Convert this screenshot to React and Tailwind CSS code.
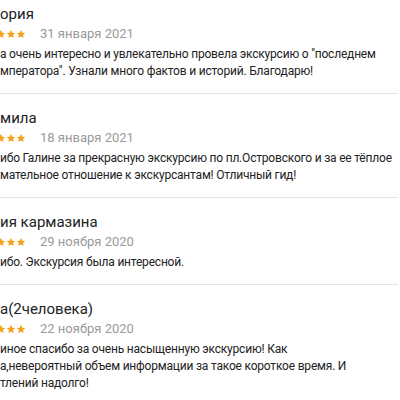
import React from 'react';

const REVIEWS = [
    {
        name: 'ория',
        date: '31 января 2021',
        lines: ['а очень интересно и увлекательно провела экскурсию о "последнем', 'мператора". Узнали много фактов и историй. Благодарю!']
    },
    {
        name: 'мила',
        date: '18 января 2021',
        lines: ['ибо Галине за прекрасную экскурсию по пл.Островского и за ее тёплое', 'мательное отношение к экскурсантам! Отличный гид!']
    },
    {
        name: 'ия кармазина',
        date: '29 ноября 2020',
        lines: ['ибо. Экскурсия была интересной.']
    },
    {
        name: 'а(2человека)',
        date: '22 ноября 2020',
        lines: ['иное спасибо за очень насыщенную экскурсию! Как', 'а,невероятный объем информации за такое короткое время. И', 'тлений надолго!']
    }
];

const Star = () => (
    <svg viewBox="0 0 24 24" className="w-[10px] h-[10px] flex-shrink-0" fill="#f3a21c">
        <path d="M12 1.8l3 7 7.4.6-5.6 4.9 1.7 7.3L12 17.7l-6.5 3.9 1.7-7.3-5.6-4.9 7.4-.6z" />
    </svg>
);

const ReviewItem = ({ review }) => (
    <div className="pt-[13px] pb-[13px] border-b border-[#e4e4e4]">
        {/* Name */}
        <div className="text-[15px] leading-[22px] text-[#222]">{review.name}</div>

        {/* Rating + date */}
        <div className="flex items-center h-[18px]">
            <div className="flex items-center ml-[-4px] w-[44px]">
                <Star />
                <Star />
                <Star />
            </div>
            <span className="text-[13px] text-[#9a9a9a]">{review.date}</span>
        </div>

        {/* Text */}
        <div className="mt-[3px] text-[12px] leading-[17px] tracking-[-0.2px] text-[#222]">
            {review.lines.map((line) => (
                <div key={line} className="whitespace-nowrap">{line}</div>
            ))}
        </div>
    </div>
);

export default function App() {
    return (
        <div className="w-[400px] h-[400px] overflow-hidden bg-white font-['Roboto',sans-serif]">
            <div className="mt-[-10px] mr-[2px]">
                {REVIEWS.map((review) => (
                    <ReviewItem key={review.date} review={review} />
                ))}
            </div>
        </div>
    );
}
